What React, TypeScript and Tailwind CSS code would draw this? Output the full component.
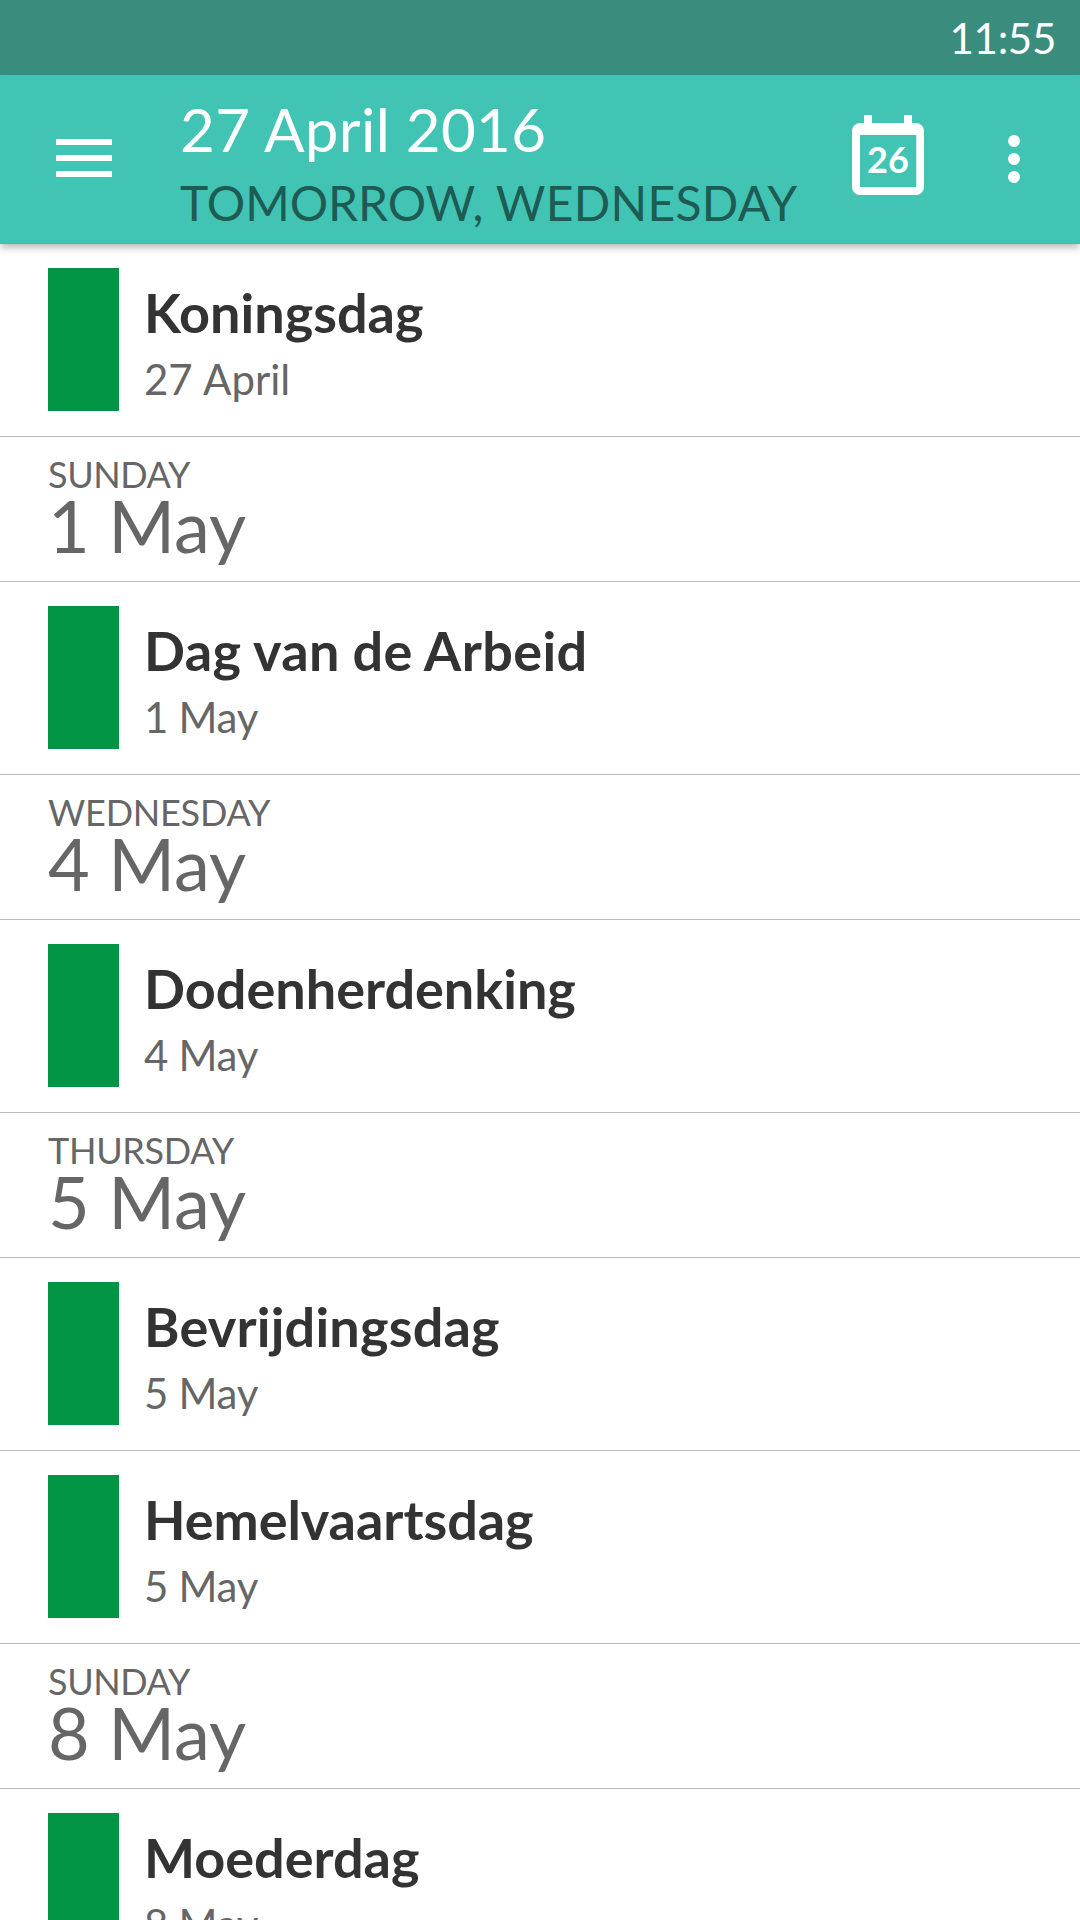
type DayRow = { kind: 'day'; day: string; date: string; tracking: string };
type EventRow = { kind: 'event'; title: string; sub: string; titleSpacing?: string; subSpacing?: string };

const rows: (DayRow | EventRow)[] = [
  { kind: 'event', title: 'Koningsdag', sub: '27 April', subSpacing: '[word-spacing:1px]' },
  { kind: 'day', day: 'SUNDAY', date: '1 May', tracking: 'tracking-[-0.4px]' },
  { kind: 'event', title: 'Dag van de Arbeid', sub: '1 May', titleSpacing: 'tracking-[0.38px] [word-spacing:-0.7px]' },
  { kind: 'day', day: 'WEDNESDAY', date: '4 May', tracking: 'tracking-[-0.22px]' },
  { kind: 'event', title: 'Dodenherdenking', sub: '4 May' },
  { kind: 'day', day: 'THURSDAY', date: '5 May', tracking: 'tracking-[-0.3px]' },
  { kind: 'event', title: 'Bevrijdingsdag', sub: '5 May', titleSpacing: 'tracking-[0.2px]' },
  { kind: 'event', title: 'Hemelvaartsdag', sub: '5 May', titleSpacing: 'tracking-[-0.05px]' },
  { kind: 'day', day: 'SUNDAY', date: '8 May', tracking: 'tracking-[-0.4px]' },
  { kind: 'event', title: 'Moederdag', sub: '8 May' },
];

function MenuIcon() {
  return (
    <svg className="mt-16 ml-14 h-[38px] w-14 shrink-0" viewBox="0 0 56 38" fill="#fff">
      <path d="M0 0h56v6H0zM0 16h56v6H0zM0 32h56v6H0z" />
    </svg>
  );
}

function TodayIcon() {
  return (
    <svg className="mt-10 h-20 w-[72px] shrink-0" viewBox="0 0 72 80">
      <path
        fill="#fff"
        fillRule="evenodd"
        d="M12 0h8v8h32V0h8v8h4a8 8 0 0 1 8 8v56a8 8 0 0 1-8 8H8a8 8 0 0 1-8-8V16a8 8 0 0 1 8-8h4zM8 20v52h56.300V20z"
      />
      <text x="36" y="58" textAnchor="middle" fill="#fff" fontSize="36" fontWeight="700">
        26
      </text>
    </svg>
  );
}

function MoreIcon() {
  return (
    <svg className="mt-[60px] ml-[84px] h-12 w-3 shrink-0" viewBox="0 0 12 48" fill="#fff">
      <circle cx="6" cy="6" r="6" />
      <circle cx="6" cy="24" r="6" />
      <circle cx="6" cy="42" r="6" />
    </svg>
  );
}

export default function App() {
  return (
    <div className="flex h-[1920px] w-[1080px] flex-col overflow-hidden bg-white font-['Lato',sans-serif] whitespace-nowrap">
      <div className="flex h-[75px] shrink-0 justify-end bg-[#3a8c7d] pt-[13px] pr-6 text-[42px] leading-[50px] tracking-[-0.3px] text-white">
        11:55
      </div>
      <header className="relative z-10 flex h-[169px] shrink-0 items-start border-b border-[#8f9896] bg-[#41c4b3] shadow-[0_5px_7px_-1px_rgba(0,0,0,0.26)]">
        <MenuIcon />
        <div className="ml-[68px] w-[672px] pt-[18px]">
          <div className="text-[60px] leading-[72px] tracking-[0.33px] text-white">27 April 2016</div>
          <div className="mt-[9px] text-[48px] leading-[58px] tracking-[-0.05px] text-[#1e5b52]">
            TOMORROW, <span className="tracking-[0.3px]">WEDNESDAY</span>
          </div>
        </div>
        <TodayIcon />
        <MoreIcon />
      </header>
      <main>
        {rows.map((r, i) =>
          r.kind === 'event' ? (
            <div key={i} className="flex h-[193px] items-start border-b border-[#bbb] pt-6 pl-12">
              <div className="h-[143px] w-[71px] bg-[#009444]" />
              <div className="ml-[25px] pt-3">
                <div className={`text-[54px] leading-[65px] font-bold text-[#333] ${r.titleSpacing ?? ''}`}>{r.title}</div>
                <div className={`mt-[9px] text-[42px] leading-[50px] text-[#666] ${r.subSpacing ?? 'tracking-[-0.3px]'}`}>
                  {r.sub}
                </div>
              </div>
            </div>
          ) : (
            <div key={i} className="h-[145px] border-b border-[#bbb] pt-[15px] pl-12 text-[#666]">
              <div className={`text-[36px] leading-[44px] ${r.tracking}`}>{r.day}</div>
              <div className="text-[72px] leading-[58px]">{r.date}</div>
            </div>
          )
        )}
      </main>
    </div>
  );
}
